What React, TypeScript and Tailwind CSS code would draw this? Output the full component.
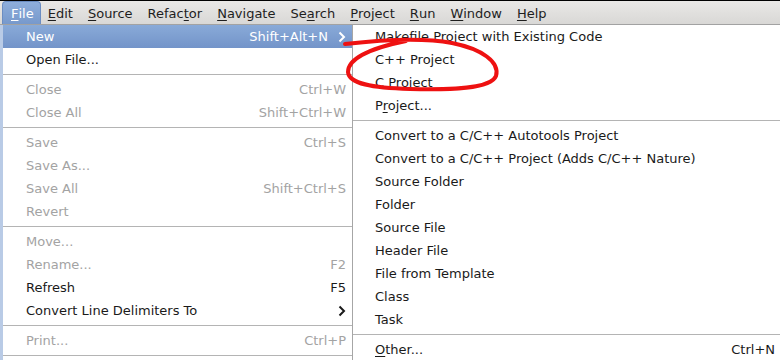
import React from 'react';

type Item = { label: string; shortcut?: string; disabled?: boolean; submenu?: boolean; active?: boolean; u?: number } | 'sep';

const menuBar: { label: string; u: number }[] = [
  { label: 'File', u: 0 },
  { label: 'Edit', u: 0 },
  { label: 'Source', u: 0 },
  { label: 'Refactor', u: 5 },
  { label: 'Navigate', u: 0 },
  { label: 'Search', u: 2 },
  { label: 'Project', u: 0 },
  { label: 'Run', u: 0 },
  { label: 'Window', u: 0 },
  { label: 'Help', u: 0 },
];

const fileMenu: Item[] = [
  { label: 'New', shortcut: 'Shift+Alt+N', submenu: true, active: true },
  { label: 'Open File...' },
  'sep',
  { label: 'Close', shortcut: 'Ctrl+W', disabled: true },
  { label: 'Close All', shortcut: 'Shift+Ctrl+W', disabled: true },
  'sep',
  { label: 'Save', shortcut: 'Ctrl+S', disabled: true },
  { label: 'Save As...', disabled: true },
  { label: 'Save All', shortcut: 'Shift+Ctrl+S', disabled: true },
  { label: 'Revert', disabled: true },
  'sep',
  { label: 'Move...', disabled: true },
  { label: 'Rename...', shortcut: 'F2', disabled: true },
  { label: 'Refresh', shortcut: 'F5' },
  { label: 'Convert Line Delimiters To', submenu: true },
  'sep',
  { label: 'Print...', shortcut: 'Ctrl+P', disabled: true },
  'sep',
];

const newMenu: Item[] = [
  { label: 'Makefile Project with Existing Code' },
  { label: 'C++ Project' },
  { label: 'C Project' },
  { label: 'Project...', u: 1 },
  'sep',
  { label: 'Convert to a C/C++ Autotools Project' },
  { label: 'Convert to a C/C++ Project (Adds C/C++ Nature)' },
  { label: 'Source Folder' },
  { label: 'Folder' },
  { label: 'Source File' },
  { label: 'Header File' },
  { label: 'File from Template' },
  { label: 'Class' },
  { label: 'Task' },
  'sep',
  { label: 'Other...', shortcut: 'Ctrl+N', u: 0 },
];

function Mnemonic({ text, u }: { text: string; u?: number }) {
  if (u === undefined) return <>{text}</>;
  return (
    <>
      {text.slice(0, u)}
      <span className="underline underline-offset-2">{text[u]}</span>
      {text.slice(u + 1)}
    </>
  );
}

function Chevron({ color }: { color: string }) {
  return (
    <svg width="8" height="12" viewBox="0 0 8 12" className="ml-[10px]">
      <polyline points="1.5,1.5 6,6 1.5,10.5" fill="none" stroke={color} strokeWidth="2" />
    </svg>
  );
}

function MenuRows({ items, pad }: { items: Item[]; pad: string }) {
  return (
    <>
      {items.map((it, i) =>
        it === 'sep' ? (
          <div key={i} className="h-[7px] flex items-center">
            <div className="h-px w-full bg-[#b4b4b4]" />
          </div>
        ) : (
          <div
            key={i}
            className={`h-[23px] flex items-center ${pad} ${
              it.active ? 'bg-gradient-to-b from-[#89aad8] to-[#7394c9] text-white' : it.disabled ? 'text-[#a3a3a3]' : 'text-[#1a1a1a]'
            }`}
          >
            <span className="flex-1 whitespace-nowrap">
              <Mnemonic text={it.label} u={it.u} />
            </span>
            {it.shortcut && <span className="whitespace-nowrap">{it.shortcut}</span>}
            {it.submenu && <Chevron color={it.active ? '#ffffff' : '#1a1a1a'} />}
          </div>
        )
      )}
    </>
  );
}

export default function App() {
  return (
    <div className="relative w-[780px] h-[360px] overflow-hidden bg-white text-[13px] leading-none" style={{ fontFamily: '"DejaVu Sans", Verdana, sans-serif' }}>
      {/* MENU BAR */}
      <div className="border-t border-black h-[25px] bg-gradient-to-b from-[#e9e8e6] to-[#d9d8d6] border-b border-b-[#a2a2a2] flex items-end pl-[2px] text-[#1e1e1e]">
        {menuBar.map((m, i) => (
          <div
            key={m.label}
            className={
              i === 0
                ? 'h-[23px] flex items-center pl-[8px] pr-[6px] bg-gradient-to-b from-[#8eaedb] to-[#7799cc] text-white rounded-t-[4px] border border-b-0 border-[#6b8dc2]'
                : 'h-[22px] flex items-center px-[7px] mr-[1px]'
            }
          >
            <Mnemonic text={m.label} u={m.u} />
          </div>
        ))}
      </div>

      <div className="flex">
        {/* FILE MENU */}
        <div className="w-[353px] border-l-[3px] border-l-[#b9cbe6] border-r border-r-[#a6a6a6]">
          <MenuRows items={fileMenu} pad="pl-[23px] pr-[6px]" />
        </div>

        {/* NEW SUBMENU */}
        <div className="flex-1">
          <MenuRows items={newMenu} pad="pl-[22px] pr-[5px]" />
        </div>
      </div>

      {/* red annotation */}
      <svg className="absolute inset-0 pointer-events-none" width="780" height="360">
        <path
          d="M345,44 C380,40 420,37 452,43 C482,49 500,62 496,76 C491,89 450,90 410,89 C372,88 349,84 348,72 C348,60 366,49 406,41"
          fill="none"
          stroke="#ee1111"
          strokeWidth="4"
          strokeLinecap="round"
        />
      </svg>
    </div>
  );
}
